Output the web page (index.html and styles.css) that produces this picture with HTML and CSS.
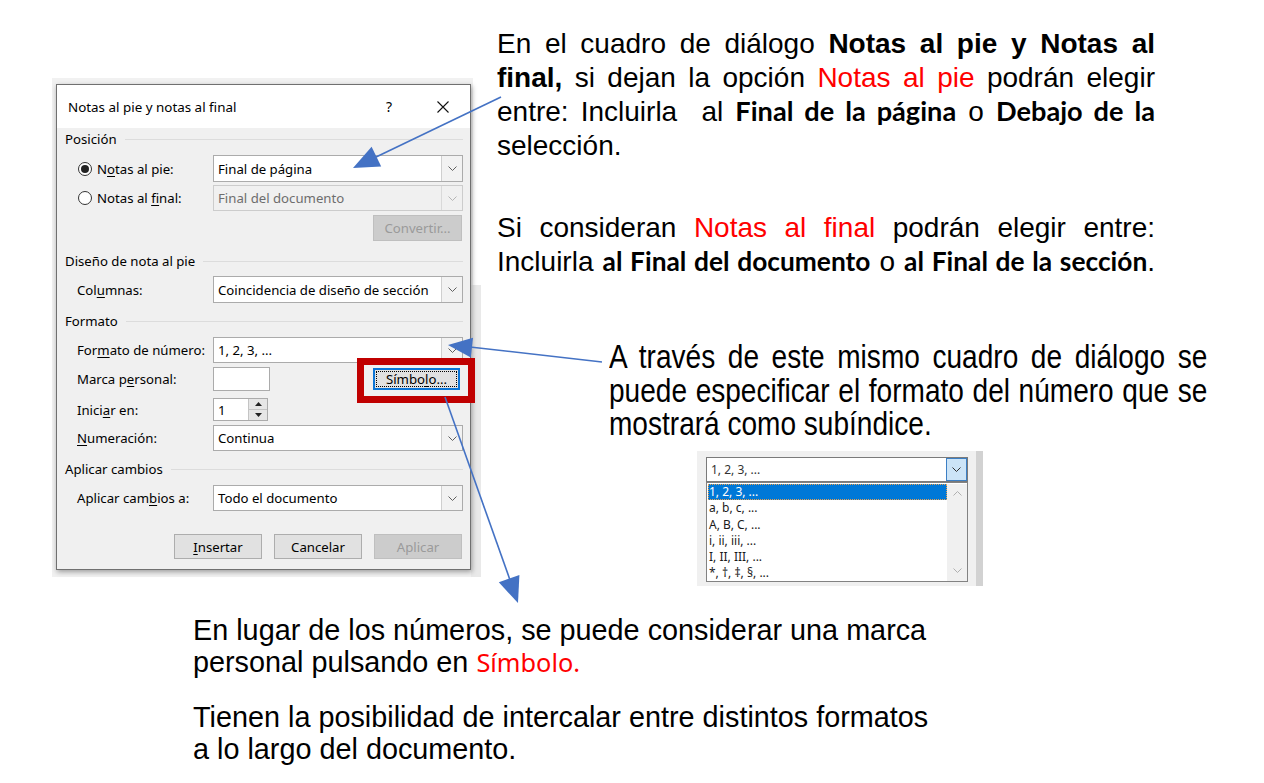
FILE: index.html
```html
<!DOCTYPE html>
<html lang="es">
<head>
<meta charset="utf-8">
<title>Notas al pie y notas al final</title>
<link rel="stylesheet" href="styles.css">
</head>
<body>
<div class="slide">

  <div class="shot-bg"></div>
  <div class="shot-strip"></div>

  <div class="dialog">
    <div class="titlebar">
      <span class="title">Notas al pie y notas al final</span>
      <span class="help">?</span>
      <span class="close"><svg width="12" height="12" viewBox="0 0 12 12"><path d="M0.5 0.5 L11.5 11.5 M11.5 0.5 L0.5 11.5" stroke="#111" stroke-width="1.1" fill="none"/></svg></span>
    </div>
    <div class="dbody">
      <div class="sec s-pos">Posición</div>

      <div class="row r-pie">
        <label class="lbl"><span class="radio on"></span><span>N<u>o</u>tas al pie:</span></label>
        <div class="combo"><span class="val">Final de página</span><span class="dd"><svg width="9" height="5" viewBox="0 0 9 5"><polyline points="0.5,0.5 4.5,4.5 8.5,0.5" fill="none" stroke="#606060"/></svg></span></div>
      </div>

      <div class="row r-fin">
        <label class="lbl"><span class="radio"></span><span>Notas al <u>f</u>inal:</span></label>
        <div class="combo off"><span class="val">Final del documento</span><span class="dd"><svg width="9" height="5" viewBox="0 0 9 5"><polyline points="0.5,0.5 4.5,4.5 8.5,0.5" fill="none" stroke="#b5b5b5"/></svg></span></div>
      </div>

      <div class="row r-conv">
        <span class="btn off">Convertir...</span>
      </div>

      <div class="sec s-dis">Diseño de nota al pie</div>

      <div class="row r-col">
        <label class="lbl"><span>Col<u>u</u>mnas:</span></label>
        <div class="combo"><span class="val">Coincidencia de diseño de sección</span><span class="dd"><svg width="9" height="5" viewBox="0 0 9 5"><polyline points="0.5,0.5 4.5,4.5 8.5,0.5" fill="none" stroke="#606060"/></svg></span></div>
      </div>

      <div class="sec s-fmt">Formato</div>

      <div class="row r-num">
        <label class="lbl"><span>For<u>m</u>ato de número:</span></label>
        <div class="combo"><span class="val">1, 2, 3, ...</span><span class="dd"><svg width="9" height="5" viewBox="0 0 9 5"><polyline points="0.5,0.5 4.5,4.5 8.5,0.5" fill="none" stroke="#606060"/></svg></span></div>
      </div>

      <div class="row r-marca">
        <label class="lbl"><span>Marca p<u>e</u>rsonal:</span></label>
        <span class="field"></span>
        <span class="btn focus"><span class="focus-ring"><span>Símbo<u>l</u>o...</span></span></span>
      </div>

      <div class="row r-ini">
        <label class="lbl"><span>Inici<u>a</u>r en:</span></label>
        <span class="spin"><span class="spin-val">1</span><span class="spin-btns"><span class="spin-up"><svg width="7" height="4" viewBox="0 0 7 4"><polygon points="0,4 3.5,0 7,4" fill="#222"/></svg></span><span class="spin-dn"><svg width="7" height="4" viewBox="0 0 7 4"><polygon points="0,0 3.5,4 7,0" fill="#222"/></svg></span></span></span>
      </div>

      <div class="row r-nume">
        <label class="lbl"><span><u>N</u>umeración:</span></label>
        <div class="combo"><span class="val">Continua</span><span class="dd"><svg width="9" height="5" viewBox="0 0 9 5"><polyline points="0.5,0.5 4.5,4.5 8.5,0.5" fill="none" stroke="#606060"/></svg></span></div>
      </div>

      <div class="sec s-apl">Aplicar cambios</div>

      <div class="row r-apl">
        <label class="lbl"><span>Aplicar cam<u>b</u>ios a:</span></label>
        <div class="combo"><span class="val">Todo el documento</span><span class="dd"><svg width="9" height="5" viewBox="0 0 9 5"><polyline points="0.5,0.5 4.5,4.5 8.5,0.5" fill="none" stroke="#606060"/></svg></span></div>
      </div>

      <div class="row r-btns">
        <span class="btn"><span><u>I</u>nsertar</span></span>
        <span class="btn">Cancelar</span>
        <span class="btn off">Aplicar</span>
      </div>
    </div>
  </div>

  <div class="hilite"></div>

  <div class="txt p1">
    <div class="jl">En el cuadro de diálogo <b>Notas al pie y Notas al</b></div>
    <div class="jl"><b>final,</b> si dejan la opción <span class="red">Notas al pie</span> podrán elegir</div>
    <div class="jl">entre: Incluirla &nbsp;al <b class="cal">Final de la página</b> o <b class="cal">Debajo de la</b></div>
    <div class="ll">selección.</div>
  </div>

  <div class="txt p2">
    <div class="jl">Si consideran <span class="red">Notas al final</span> podrán elegir entre:</div>
    <div class="jl">Incluirla <b class="cal sm">al Final del documento</b> o <b class="cal sm">al Final de la sección</b>.</div>
  </div>

  <div class="txt p3">
    <div class="jl">A través de este mismo cuadro de diálogo se</div>
    <div class="jl">puede especificar el formato del número que se</div>
    <div class="ll">mostrará como subíndice.</div>
  </div>

  <div class="fmtpick">
    <div class="fp-combo">
      <span class="fp-val">1, 2, 3, ...</span>
      <span class="fp-dd"><svg width="9" height="5" viewBox="0 0 9 5"><polyline points="0.5,0.5 4.5,4.5 8.5,0.5" fill="none" stroke="#303030"/></svg></span>
    </div>
    <div class="fp-list">
      <div class="fp-items">
        <div class="fp-item sel">1, 2, 3, ...</div>
        <div class="fp-item">a, b, c, ...</div>
        <div class="fp-item">A, B, C, ...</div>
        <div class="fp-item">i, ii, iii, ...</div>
        <div class="fp-item">I, II, III, ...</div>
        <div class="fp-item">*, †, ‡, §, ...</div>
      </div>
      <div class="fp-scroll">
        <svg width="9" height="5" viewBox="0 0 9 5"><polyline points="0.5,4.5 4.5,0.5 8.5,4.5" fill="none" stroke="#b0b0b0"/></svg>
        <svg width="9" height="5" viewBox="0 0 9 5"><polyline points="0.5,0.5 4.5,4.5 8.5,0.5" fill="none" stroke="#b0b0b0"/></svg>
      </div>
    </div>
  </div>

  <div class="txt p4">
    <div class="ln">En lugar de los números, se puede considerar una marca</div>
    <div class="ln">personal pulsando en <span class="red cal-r">Símbolo.</span></div>
    <div class="ln gap">Tienen la posibilidad de intercalar entre distintos formatos</div>
    <div class="ln">a lo largo del documento.</div>
  </div>

  <svg class="arrows" width="1264" height="783" viewBox="0 0 1264 783">
    <g stroke="#4472c4" stroke-width="1.6" fill="none">
      <line x1="501" y1="97" x2="374" y2="158"/>
      <line x1="602" y1="362" x2="470" y2="347"/>
      <line x1="445" y1="397" x2="510" y2="580"/>
    </g>
    <g fill="#4472c4">
      <polygon points="353,168 371.6,146.8 381.2,166.6"/>
      <polygon points="448,345 473,337.7 470.8,357.5"/>
      <polygon points="518,603 498.8,582.3 519.4,574.9"/>
    </g>
  </svg>
</div>
</body>
</html>
```

FILE: styles.css
```css
* { box-sizing: border-box; margin: 0; padding: 0; }

html, body {
  width: 1264px;
  height: 783px;
  overflow: hidden;
  background: #ffffff;
}

body {
  font-family: "Liberation Sans", Arial, sans-serif;
  color: #000;
}

.slide {
  position: relative;
  width: 1264px;
  height: 783px;
}

/* screenshot backdrop */
.shot-bg {
  position: absolute;
  left: 52px;
  top: 78px;
  width: 421px;
  height: 499px;
  background: #f1f1f1;
}
.shot-strip {
  position: absolute;
  left: 471px;
  top: 285px;
  width: 10px;
  height: 292px;
  background: #e9e9e9;
}

/* ---------- dialog ---------- */
.dialog {
  position: absolute;
  left: 56px;
  top: 84px;
  width: 415px;
  border: 1px solid #707070;
  background: #f0f0f0;
  box-shadow: 1px 2px 5px rgba(0, 0, 0, 0.35);
  font-family: "Noto Sans", "Open Sans", sans-serif;
  font-size: 13.2px;
  color: #000;
}

.dialog u {
  text-decoration: underline;
  text-underline-offset: 2px;
  text-decoration-thickness: 1px;
}

.titlebar {
  height: 43px;
  background: #fff;
  display: flex;
  align-items: center;
  padding-left: 11px;
  padding-right: 19px;
}
.title { flex: 1; font-size: 13.4px; }
.help {
  width: 16px;
  text-align: center;
  font-size: 14px;
  margin-right: 38px;
}
.close {
  width: 16px;
  height: 16px;
  display: flex;
  align-items: center;
  justify-content: center;
}

.dbody {
  padding: 0 7px 10px 8px;
}

.sec {
  display: flex;
  align-items: center;
  height: 20px;
  color: #000;
}
.sec::after {
  content: "";
  flex: 1;
  height: 1px;
  background: #dcdcdc;
  margin-left: 8px;
  margin-top: 1px;
}

.row {
  display: flex;
  align-items: center;
}

.lbl {
  width: 136px;
  margin-left: 12px;
  display: flex;
  align-items: center;
  white-space: nowrap;
}

.radio {
  width: 14px;
  height: 14px;
  border: 1px solid #333;
  border-radius: 50%;
  background: #fff;
  margin-left: 1px;
  margin-right: 5px;
  display: flex;
  align-items: center;
  justify-content: center;
}
.radio.on::after {
  content: "";
  width: 8px;
  height: 8px;
  border-radius: 50%;
  background: #222;
}

.combo {
  width: 250px;
  height: 100%;
  background: #fff;
  border: 1px solid #ababab;
  display: flex;
  align-items: center;
}
.combo .val {
  flex: 1;
  padding-left: 4px;
  white-space: nowrap;
  overflow: hidden;
}
.dd {
  width: 21px;
  height: 100%;
  background: #f2f2f2;
  border-left: 1px solid #cfcfcf;
  display: flex;
  align-items: center;
  justify-content: center;
}
.combo.off {
  background: #f0f0f0;
  border-color: #cccccc;
  color: #6d6d6d;
}
.combo.off .dd {
  background: #f0f0f0;
  border-left-color: #d9d9d9;
}

.btn {
  width: 88px;
  height: 25px;
  background: #e1e1e1;
  border: 1px solid #adadad;
  display: flex;
  align-items: center;
  justify-content: center;
  white-space: nowrap;
}
.btn.off {
  background: #cccccc;
  border-color: #bfbfbf;
  color: #9a9a9a;
}
.btn.focus {
  width: 87px;
  height: 22px;
  border: 2px solid #0a74d6;
  margin-left: auto;
  margin-right: 3px;
  padding: 1px;
}
.focus-ring {
  width: 100%;
  height: 100%;
  border: 1px dotted #000;
  display: flex;
  align-items: center;
  justify-content: center;
}

.field {
  width: 57px;
  height: 24px;
  background: #fff;
  border: 1px solid #ababab;
}

.spin {
  width: 55px;
  height: 23px;
  display: flex;
  background: #fff;
  border: 1px solid #ababab;
}
.spin-val {
  flex: 1;
  padding-left: 4px;
  display: flex;
  align-items: center;
}
.spin-btns {
  width: 19px;
  display: flex;
  flex-direction: column;
  border-left: 1px solid #c4c4c4;
}
.spin-up, .spin-dn {
  flex: 1;
  background: #e6e6e6;
  display: flex;
  align-items: center;
  justify-content: center;
}
.spin-up { border-bottom: 1px solid #c4c4c4; }

/* row vertical rhythm */
.s-pos   { margin-top: 1px; }
.r-pie   { margin-top: 6px;  height: 27px; }
.r-fin   { margin-top: 3px;  height: 26px; }
.r-conv  { margin-top: 4px;  height: 26px; justify-content: flex-end; }
.r-conv .btn { width: 89px; height: 26px; margin-right: 1px; }
.s-dis   { margin-top: 10px; }
.r-col   { margin-top: 5px;  height: 27px; }
.s-fmt   { margin-top: 8px; }
.r-num   { margin-top: 6px;  height: 26px; }
.r-marca { margin-top: 4px;  height: 24px; }
.r-ini   { margin-top: 7px;  height: 23px; }
.r-nume  { margin-top: 4px;  height: 26px; }
.s-apl   { margin-top: 8px; }
.r-apl   { margin-top: 6px;  height: 26px; }
.r-btns  {
  margin-top: 23px;
  height: 25px;
  justify-content: flex-end;
  gap: 12px;
  padding-right: 1px;
}

/* red highlight frame */
.hilite {
  position: absolute;
  left: 357px;
  top: 358px;
  width: 118px;
  height: 45px;
  border: 7px solid #c00000;
}

/* ---------- slide texts ---------- */
.txt {
  position: absolute;
  font-family: "Liberation Sans", Arial, sans-serif;
  color: #000;
}
.red { color: #ff0000; }
.cal {
  font-family: Lato, "Open Sans", sans-serif;
  font-weight: 700;
  font-size: 0.97em;
}
.cal.sm { font-size: 0.94em; }
.cal-r {
  font-family: "Noto Sans", "Open Sans", sans-serif;
  font-style: normal;
  font-weight: 400;
  font-size: 0.88em;
}

.jl {
  text-align: justify;
  text-align-last: justify;
}
.ll { text-align: left; }

.p1 {
  left: 497px;
  top: 27px;
  width: 658px;
  font-size: 28px;
  line-height: 33.5px;
}
.p2 {
  left: 497px;
  top: 211px;
  width: 658px;
  font-size: 28px;
  line-height: 33.5px;
}
.p3 {
  left: 609px;
  top: 340px;
  width: 704px;
  font-size: 33px;
  line-height: 33.5px;
  transform: scaleX(0.85);
  transform-origin: 0 0;
}
.p4 {
  left: 193px;
  top: 614px;
  width: 760px;
  font-size: 28.8px;
  line-height: 32px;
}
.p4 .ln { white-space: nowrap; }
.p4 .gap { margin-top: 23px; }

/* ---------- number format picker ---------- */
.fmtpick {
  position: absolute;
  left: 697px;
  top: 451px;
  width: 286px;
  height: 135px;
  background: #f0f0f0;
  border-right: 7px solid #d2d2d2;
  padding: 6px 0 0 9px;
  font-family: "Noto Sans", "Open Sans", sans-serif;
  font-size: 12px;
}
.fp-combo {
  width: 262px;
  height: 25px;
  background: #fff;
  border: 1px solid #7a7a7a;
  display: flex;
  align-items: center;
}
.fp-val {
  flex: 1;
  padding-left: 4px;
  color: #333;
}
.fp-dd {
  width: 21px;
  height: 100%;
  background: #cce4f7;
  border: 1px solid #3c7fc4;
  display: flex;
  align-items: center;
  justify-content: center;
}
.fp-list {
  width: 262px;
  height: 100px;
  background: #fff;
  border: 1px solid #828282;
  display: flex;
  padding: 1px 0 0 1px;
}
.fp-items {
  flex: 1;
  overflow: hidden;
}
.fp-item {
  height: 16.3px;
  line-height: 16px;
  padding-left: 1px;
  color: #1a1a1a;
  white-space: nowrap;
}
.fp-item.sel {
  background: #0078d7;
  color: #fff;
  outline: 1px dotted #e8a050;
  outline-offset: -1px;
}
.fp-scroll {
  width: 20px;
  background: #f0f0f0;
  display: flex;
  flex-direction: column;
  align-items: center;
  justify-content: space-between;
  padding: 7px 0 8px;
}

/* ---------- arrows overlay ---------- */
.arrows {
  position: absolute;
  left: 0;
  top: 0;
  pointer-events: none;
}
```
